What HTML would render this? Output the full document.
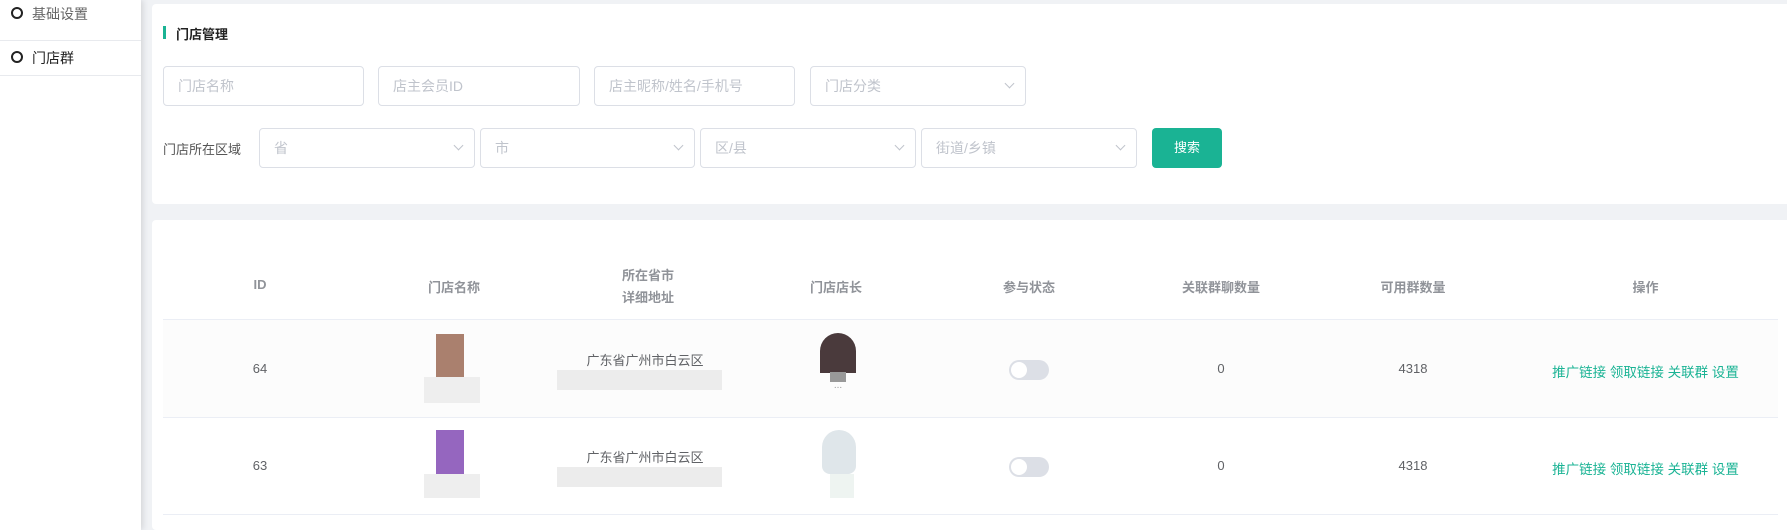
<!DOCTYPE html>
<html><head><meta charset="utf-8"><style>
*{box-sizing:border-box;margin:0;padding:0}
body{width:1787px;height:522px;overflow:hidden;background:#f0f2f5;font-family:"Liberation Sans","Noto Sans CJK SC",sans-serif;font-size:13px;color:#606266;position:relative}
.side{position:absolute;left:0;top:0;width:141px;height:530px;background:#fff;box-shadow:2px 0 6px rgba(0,0,0,.12)}
.si{position:absolute;left:0;width:141px;border-bottom:1px solid #e8eaee;font-size:14px;color:#666}
.si i{position:absolute;left:11px;width:12px;height:12px;border:2px solid #222;border-radius:50%}
.card{position:absolute;background:#fff;border-radius:4px}
.inp{position:absolute;height:40px;border:1px solid #dcdfe6;border-radius:4px;color:#c0c4cc;font-size:14px;line-height:38px;padding-left:14px}
.arr{position:absolute;right:12px;top:13px;width:7px;height:7px;border-right:1px solid #c0c4cc;border-bottom:1px solid #c0c4cc;transform:rotate(45deg)}
.th{position:absolute;top:0;text-align:center;color:#909399;font-weight:bold;font-size:13px}
.td{position:absolute;text-align:center}
.tg{position:absolute;width:40px;height:20px;border-radius:10px;background:#dcdfe6}
.tg:after{content:"";position:absolute;left:2px;top:2px;width:16px;height:16px;border-radius:50%;background:#fff}
.op{color:#1ab394;font-size:13.5px}
</style></head><body>
<div class="side">
 <div class="si" style="top:0;height:41px"><i style="top:7px"></i><span style="position:absolute;left:32px;top:4px">基础设置</span></div>
 <div class="si" style="top:41px;height:35px"><i style="top:10px"></i><span style="position:absolute;left:32px;top:7px;color:#222">门店群</span></div>
</div>
<div class="card" style="left:152px;top:4px;width:1640px;height:200px">
 <div style="position:absolute;left:11px;top:22px;width:3px;height:13px;background:#1ab394"></div>
 <div style="position:absolute;left:24px;top:20px;font-size:13px;font-weight:bold;color:#222">门店管理</div>
</div>
<div class="inp" style="left:163px;top:66px;width:201px">门店名称</div>
<div class="inp" style="left:378px;top:66px;width:202px">店主会员ID</div>
<div class="inp" style="left:594px;top:66px;width:201px">店主昵称/姓名/手机号</div>
<div class="inp" style="left:810px;top:66px;width:216px">门店分类<span class="arr"></span></div>
<div style="position:absolute;left:163px;top:139px;font-size:13px;color:#555">门店所在区域</div>
<div class="inp" style="left:259px;top:128px;width:216px">省<span class="arr"></span></div>
<div class="inp" style="left:480px;top:128px;width:215px">市<span class="arr"></span></div>
<div class="inp" style="left:700px;top:128px;width:216px">区/县<span class="arr"></span></div>
<div class="inp" style="left:921px;top:128px;width:216px">街道/乡镇<span class="arr"></span></div>
<div style="position:absolute;left:1152px;top:128px;width:70px;height:40px;background:#1ab394;border-radius:4px;color:#fff;font-size:13px;line-height:40px;text-align:center">搜索</div>

<div class="card" style="left:152px;top:220px;width:1640px;height:310px"></div>
<div style="position:absolute;left:163px;top:320px;width:1615px;height:97px;background:#fcfcfc"></div>
<div style="position:absolute;left:163px;top:319px;width:1615px;height:1px;background:#ebeef5"></div>
<div style="position:absolute;left:163px;top:417px;width:1615px;height:1px;background:#ebeef5"></div>
<div style="position:absolute;left:163px;top:514px;width:1615px;height:1px;background:#ebeef5"></div>
<div style="position:absolute;left:163px;top:276px;width:1615px;height:30px">
 <div class="th" style="left:0;width:194px;top:1px">ID</div>
 <div class="th" style="left:194px;width:194px;top:1px">门店名称</div>
 <div class="th" style="left:388px;width:194px;top:-11px;line-height:22px">所在省市<br>详细地址</div>
 <div class="th" style="left:576px;width:194px;top:1px">门店店长</div>
 <div class="th" style="left:769px;width:194px;top:1px">参与状态</div>
 <div class="th" style="left:961px;width:194px;top:1px">关联群聊数量</div>
 <div class="th" style="left:1153px;width:194px;top:1px">可用群数量</div>
 <div class="th" style="left:1354px;width:257px;top:1px">操作</div>
</div>
<!-- row1 -->
<div class="td" style="left:163px;width:194px;top:361px">64</div>
<div style="position:absolute;left:436px;top:334px;width:28px;height:46px;background:#9b6a55;opacity:.85"></div>
<div style="position:absolute;left:424px;top:377px;width:56px;height:26px;background:#eeeeee"></div>
<div class="td" style="left:548px;width:194px;top:350px">广东省广州市白云区</div>
<div style="position:absolute;left:557px;top:370px;width:165px;height:20px;background:#ececec"></div>
<div style="position:absolute;left:820px;top:333px;width:36px;height:40px;background:#4a3a3c;border-radius:18px 18px 0 0"></div>
<div style="position:absolute;left:830px;top:372px;width:16px;height:10px;background:#999"></div>
<div class="td" style="left:741px;width:194px;top:380px;color:#999;font-size:10px">...</div>
<div class="tg" style="left:1009px;top:360px"></div>
<div class="td" style="left:1124px;width:194px;top:361px">0</div>
<div class="td" style="left:1316px;width:194px;top:361px">4318</div>
<div class="td op" style="left:1517px;width:257px;top:361px">推广链接 领取链接 关联群 设置</div>
<!-- row2 -->
<div class="td" style="left:163px;width:194px;top:458px">63</div>
<div style="position:absolute;left:436px;top:430px;width:28px;height:44px;background:#8a55b8;opacity:.9"></div>
<div style="position:absolute;left:424px;top:474px;width:56px;height:24px;background:#eeeeee"></div>
<div class="td" style="left:548px;width:194px;top:447px">广东省广州市白云区</div>
<div style="position:absolute;left:557px;top:467px;width:165px;height:20px;background:#ececec"></div>
<div style="position:absolute;left:822px;top:430px;width:34px;height:44px;background:#dfe6ea;border-radius:17px 17px 8px 8px"></div>
<div style="position:absolute;left:830px;top:474px;width:24px;height:24px;background:#eef4f1"></div>
<div class="tg" style="left:1009px;top:457px"></div>
<div class="td" style="left:1124px;width:194px;top:458px">0</div>
<div class="td" style="left:1316px;width:194px;top:458px">4318</div>
<div class="td op" style="left:1517px;width:257px;top:458px">推广链接 领取链接 关联群 设置</div>
</body></html>
